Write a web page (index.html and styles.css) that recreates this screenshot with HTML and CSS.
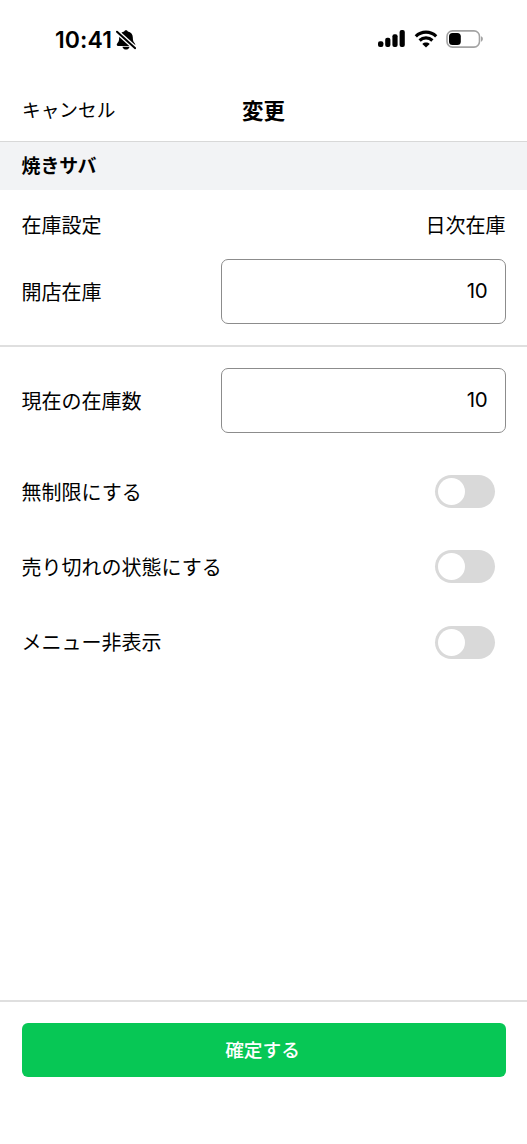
FILE: index.html
```html
<!DOCTYPE html>
<html lang="ja">
<head>
<meta charset="utf-8">
<title>変更</title>
<link rel="stylesheet" href="styles.css">
</head>
<body>
<div class="screen">
  <div class="status">
    <div class="clock">
      <span class="time">10:41</span>
      <svg class="bell" width="20" height="20" viewBox="0 0 20 20">
        <path d="M10 .3c1 0 1.700.6 1.800 1.200 3.200.7 5 2.900 5 5.800 0 3.600.7 4.700 2 6.200.9 1 .4 2.400-.9 2.400H2.100c-1.300 0-1.800-1.400-.9-2.400 1.300-1.500 2-2.600 2-6.200 0-2.900 1.800-5.100 5-5.800C8.300.9 9 .3 10 .3Z"/>
        <path d="M6.500 16.700h7c-.3 1.700-1.700 2.900-3.500 2.900s-3.200-1.200-3.500-2.900Z"/>
        <path class="slash-gap" d="M.2 1 19.500 18.500"/>
        <path class="slash" d="M1 1.700 19.200 18.200"/>
      </svg>
    </div>
    <div class="indicators">
      <svg width="28" height="20" viewBox="0 0 28 20">
        <rect x="0" y="12.200" width="5.400" height="5.800" rx="2"/>
        <rect x="7.200" y="8.800" width="5.200" height="9.200" rx="2"/>
        <rect x="14.400" y="5.200" width="5.200" height="12.800" rx="2"/>
        <rect x="21.600" y="1" width="5.200" height="17" rx="2"/>
      </svg>
      <svg class="wifi" width="24" height="20" viewBox="0 0 24 20">
        <path class="arc" d="M1.800 7.300C7.500 1.800 16.500 1.800 22.200 7.300"/>
        <path class="arc" d="M5.600 11.500C9.200 8.100 14.800 8.100 18.400 11.500"/>
        <path d="M12 18.500 8.300 14.900C10.300 13 13.700 13 15.700 14.900Z"/>
      </svg>
      <svg width="38" height="20" viewBox="0 0 38 20">
        <rect class="shell" x="1" y="1.900" width="32.500" height="16.200" rx="5.500"/>
        <rect x="3" y="4" width="11.800" height="12" rx="3.500"/>
        <path class="cap" d="M35 7.300C37.500 8.100 37.500 11.900 35 12.700Z"/>
      </svg>
    </div>
  </div>
  <header class="header">
    <span class="cancel">キャンセル</span>
    <h1 class="title">変更</h1>
  </header>
  <h2 class="item-name">焼きサバ</h2>
  <main class="content">
    <section class="group">
      <div class="row"><span>在庫設定</span><span>日次在庫</span></div>
      <div class="row stock"><span>開店在庫</span><div class="field">10</div></div>
    </section>
    <section class="group current">
      <div class="row stock"><span>現在の在庫数</span><div class="field">10</div></div>
    </section>
    <section class="options">
      <div class="row option"><span>無制限にする</span><span class="toggle"></span></div>
      <div class="row option"><span>売り切れの状態にする</span><span class="toggle"></span></div>
      <div class="row option"><span>メニュー非表示</span><span class="toggle"></span></div>
    </section>
  </main>
  <footer class="footer"><div class="confirm">確定する</div></footer>
</div>
</body>
</html>
```
FILE: styles.css
```css
* { box-sizing: border-box; }
body {
  margin: 0;
  background: #fff;
  color: #000;
  font-family: "Noto Sans CJK JP", sans-serif;
  font-size: 20px;
}
.screen {
  display: flex;
  flex-direction: column;
  height: 1144px;
}
.status {
  display: flex;
  justify-content: space-between;
  align-items: center;
  height: 78px;
  padding: 0 43px 0 55px;
}
.clock { display: flex; align-items: center; gap: 4px; padding-top: 1px; }
.time {
  font: 600 23px/28px Inter, sans-serif;
  letter-spacing: 0.1px;
  padding-top: 1px;
}
.bell { display: block; }
.slash-gap { stroke: #fff; stroke-width: 4.6; }
.slash { stroke: #000; stroke-width: 2; stroke-linecap: round; }
.indicators { display: flex; gap: 8px; margin-right: 0.5px; }
.arc { fill: none; stroke: #000; stroke-width: 3.2; }
.shell { fill: none; stroke: #a3a3a3; stroke-width: 1.6; }
.cap { fill: #a3a3a3; }
.header {
  display: grid;
  grid-template-columns: 1fr auto 1fr;
  align-items: center;
  height: 64px;
  padding: 0 22px 1px;
  border-bottom: 1px solid #d8d8d8;
}
.cancel { font-size: 18.7px; padding-bottom: 1px; }
.title { margin: 0; font-size: 21.5px; font-weight: 700; }
.item-name {
  margin: 0;
  height: 48px;
  padding-left: 21.5px;
  background: #f2f3f5;
  font-size: 18.9px;
  font-weight: 700;
  line-height: 46px;
}
.content { flex: 1; }
.row {
  display: flex;
  justify-content: space-between;
  align-items: center;
  height: 30px;
  padding: 0 21.5px;
}
.group {
  padding: 19px 0 21px;
  border-bottom: 2px solid #dfdfdf;
}
.stock { height: 65px; }
.group .row + .stock { margin-top: 20px; }
.current { padding: 21px 0 0; border: 0; }
.field {
  width: 285px;
  height: 65px;
  padding-right: 17px;
  border: 1.5px solid #8c8c8c;
  border-radius: 7px;
  font: 20.5px/62px Inter, sans-serif;
  letter-spacing: -0.3px;
  text-align: right;
}
.options { padding-top: 21px; }
.option { height: 75.3px; padding-right: 32px; }
.option span:first-child { padding-bottom: 0.5px; }
.toggle {
  width: 60px;
  height: 33px;
  padding: 3px;
  border-radius: 17px;
  background: #d9d9d9;
}
.toggle::before {
  content: "";
  display: block;
  width: 27px;
  height: 27px;
  border-radius: 50%;
  background: #fff;
}
.footer {
  height: 144px;
  padding: 21px 21.5px 0;
  border-top: 2px solid #dfdfdf;
}
.confirm {
  height: 54px;
  padding-right: 2px;
  border-radius: 6px;
  background: #07c755;
  color: #fff;
  font-size: 18.7px;
  font-weight: 500;
  line-height: 52px;
  text-align: center;
}
```
